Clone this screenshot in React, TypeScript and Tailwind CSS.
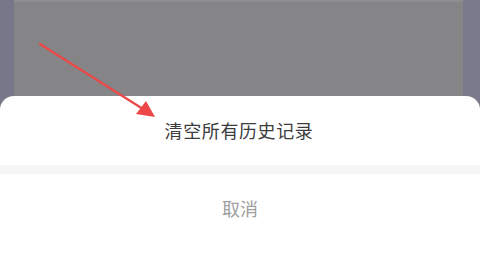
import React from 'react';

export default function App() {
  return (
    <div
      className="relative w-[480px] h-[261px] overflow-hidden flex flex-col bg-white"
      style={{ fontFamily: '"Noto Sans CJK SC", "Noto Sans", sans-serif' }}
    >
      {/* Dimmed page behind the sheet */}
      <div className="h-[108px] shrink-0 flex">
        <div className="w-[14px] bg-[#77778a]"></div>
        <div className="flex-1 bg-[#858587] border-t-2 border-[#8e8e90]"></div>
        <div className="w-[17px] bg-[#7b7a8c]"></div>
      </div>

      {/* Action sheet */}
      <div className="-mt-[12px] flex-1 bg-white rounded-t-[14px] flex flex-col">
        <div className="h-[69px] flex items-center justify-center pr-[2px] text-[18px] text-[#3c3c3c] tracking-[0.6px]">
          清空所有历史记录
        </div>
        <div className="h-[9px] bg-[#f5f5f5]"></div>
        <div className="h-[69px] flex items-center justify-center text-[18px] text-[#a0a0a0]">
          取消
        </div>
      </div>

      {/* Red annotation arrow */}
      <svg className="absolute left-0 top-0 pointer-events-none" width="480" height="261" viewBox="0 0 480 261">
        <line x1="40" y1="44" x2="143" y2="109" stroke="#ec4848" strokeWidth="2.2" strokeLinecap="round" />
        <polygon points="155,117 136,114 146,101" fill="#ec4848" />
      </svg>
    </div>
  );
}
